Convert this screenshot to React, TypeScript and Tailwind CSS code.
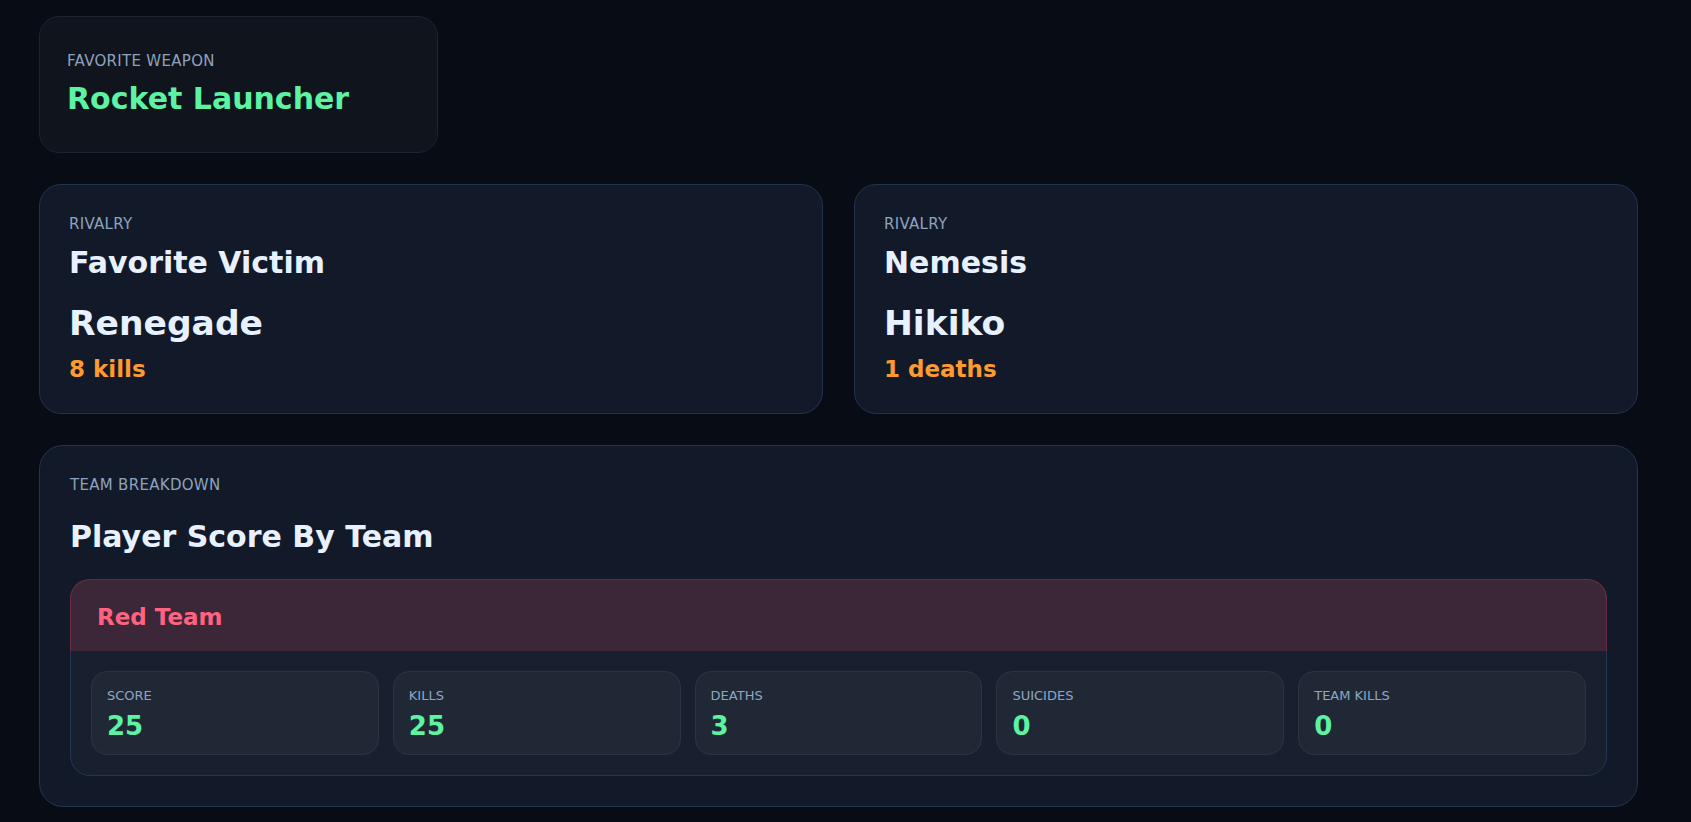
import React from "react";

const font = { fontFamily: '"DejaVu Sans", Verdana, sans-serif' };

type Stat = { label: string; value: number };

const stats: Stat[] = [
  { label: "SCORE", value: 25 },
  { label: "KILLS", value: 25 },
  { label: "DEATHS", value: 3 },
  { label: "SUICIDES", value: 0 },
  { label: "TEAM KILLS", value: 0 },
];

const Label = ({ children }: { children: React.ReactNode }) => (
  <p className="text-[15px] leading-[20px] tracking-[0.3px] text-[#8ea2bf]">{children}</p>
);

const RivalryCard = ({
  title,
  name,
  detail,
}: {
  title: string;
  name: string;
  detail: string;
}) => (
  <div className="rounded-[22px] border border-[#22324d] bg-[#121a2a] px-[29px] pt-[29px] pb-[30px]">
    <Label>RIVALRY</Label>
    <h2 className="mt-[11px] text-[30px] leading-[36px] font-bold text-[#e8f1ff]">
      {title}
    </h2>
    <p className="mt-[22px] text-[34.5px] leading-[41px] font-bold text-[#e8f1ff]">
      {name}
    </p>
    <p className="mt-[11px] text-[23px] leading-[28px] font-bold text-[#ff9a2e]">
      {detail}
    </p>
  </div>
);

const StatCell = ({ label, value }: Stat) => (
  <div className="rounded-[16px] border border-[#2c3444] bg-[#212835] px-[15px] pt-[16px] pb-[12px]">
    <p className="text-[13px] leading-[16px] text-[#8ea6c6]">{label}</p>
    <p className="mt-[7px] text-[26px] leading-[31px] font-bold text-[#5cf3a3]">
      {value}
    </p>
  </div>
);

export default function App() {
  return (
    <div
      className="min-h-screen bg-[#080c15] pl-[39px] pr-[53px] pt-[16px] pb-[16px] flex flex-col gap-[31px]"
      style={font}
    >
      {/* favorite weapon */}
      <div className="w-[399px] rounded-[20px] border border-[#1e232d] bg-[#10141c] px-[27px] pt-[34px] pb-[35px]">
        <Label>FAVORITE WEAPON</Label>
        <p className="mt-[10px] text-[30px] leading-[36px] font-bold text-[#5cf3a3]">
          Rocket Launcher
        </p>
      </div>

      {/* rivalries */}
      <div className="grid grid-cols-2 gap-[31px]">
        <RivalryCard title="Favorite Victim" name="Renegade" detail="8 kills" />
        <RivalryCard title="Nemesis" name="Hikiko" detail="1 deaths" />
      </div>

      {/* team breakdown */}
      <div className="rounded-[24px] border border-[#22344f] bg-[#121a29] px-[30px] pt-[29px] pb-[30px]">
        <Label>TEAM BREAKDOWN</Label>
        <h2 className="mt-[24px] text-[30px] leading-[36px] font-bold text-[#e8f1ff]">
          Player Score By Team
        </h2>
        <div className="mt-[24px] rounded-[20px] border border-[#243657] bg-[#181f2e]">
          <div className="-mx-px -mt-px rounded-t-[20px] border border-b-0 border-[#6a2c45] bg-[#3b2738] pl-[26px] pt-[23px] pb-[20px]">
            <h3 className="text-[23px] leading-[28px] font-bold text-[#ff6381]">
              Red Team
            </h3>
          </div>
          <div className="grid grid-cols-5 gap-[14px] px-[20px] pt-[20px] pb-[20px]">
            {stats.map((s) => (
              <StatCell key={s.label} {...s} />
            ))}
          </div>
        </div>
      </div>
    </div>
  );
}
